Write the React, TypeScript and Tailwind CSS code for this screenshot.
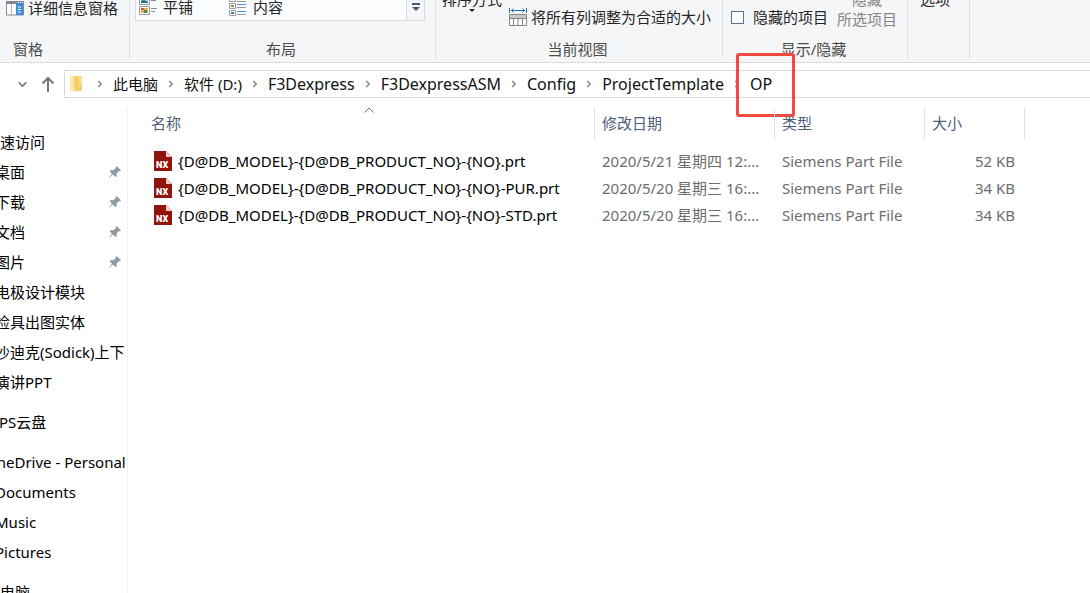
import React from 'react';
import { ChevronRight, ChevronDown } from 'lucide-react';

const files = [
  { name: '{D@DB_MODEL}-{D@DB_PRODUCT_NO}-{NO}.prt', date: '2020/5/21 星期四 12:...', size: '52 KB' },
  { name: '{D@DB_MODEL}-{D@DB_PRODUCT_NO}-{NO}-PUR.prt', date: '2020/5/20 星期三 16:...', size: '34 KB' },
  { name: '{D@DB_MODEL}-{D@DB_PRODUCT_NO}-{NO}-STD.prt', date: '2020/5/20 星期三 16:...', size: '34 KB' },
];

const drives = ['此电脑', '软件 (D:)'];
const folders = ['F3Dexpress', 'F3DexpressASM', 'Config', 'ProjectTemplate', 'OP'];

const sections = [
  {
    title: '快速访问',
    items: [
      { name: '桌面', pinned: true },
      { name: '下载', pinned: true },
      { name: '文档', pinned: true },
      { name: '图片', pinned: true },
      { name: '电极设计模块' },
      { name: '检具出图实体' },
      { name: '沙迪克(Sodick)上下' },
      { name: '演讲PPT' },
    ],
  },
  { title: 'WPS云盘', items: [] },
  { title: 'OneDrive - Personal', items: [{ name: 'Documents' }, { name: 'Music' }, { name: 'Pictures' }] },
  { title: '此电脑', items: [] },
];

function PinIcon() {
  return (
    <svg width="14" height="14" viewBox="0 0 14 14" className="shrink-0" fill="#8f9aa3">
      <path d="M8.6 1 13 5.2l-1 1-1-.2-2.4 2.6.1 2.3-1.2 1.2-2.7-2.7L1.4 12.8 1 12.6l3-3.9L1.6 6.2l1.2-1.1 2.5.1L8 2.8l-.3-1z" />
    </svg>
  );
}

function FileIcon() {
  return (
    <svg width="18" height="20" viewBox="0 0 18 20" className="shrink-0">
      <path d="M0 0h12l6 6v14H0z" fill="#8f140c" />
      <path d="M12 0l6 6h-6z" fill="#f3c9c9" />
      <text x="2" y="17" fontSize="9" fontWeight="900" fontFamily="Roboto, sans-serif" fill="#fff">NX</text>
    </svg>
  );
}

function FolderIcon() {
  return (
    <svg width="13" height="18" viewBox="0 0 13 18" className="shrink-0">
      <path d="M3 1h9v15H3z" fill="#f5cf69" />
      <path d="M9 1h3v9H9z" fill="#fbdf8f" />
      <path d="M0 1h4v16l-4-2z" fill="#ffe9a6" />
    </svg>
  );
}

function DetailsPaneIcon() {
  return (
    <svg width="18" height="15" viewBox="0 0 18 15" className="shrink-0">
      <path d="M.5 1h17v13H.5z" fill="#fff" stroke="#858a90" />
      <path d="M0 0h18v3H0z" fill="#858a90" />
      <path d="M5.5 3v11" stroke="#b3b7bb" />
      <path d="M10 2h7v12h-7z" fill="#3c8fdc" />
      <path d="M12 6h3M12 8.5h3M12 11h3" stroke="#fff" />
      <path d="M12 1.5h1M14 1.5h1M16 1.5h1" stroke="#fff" />
    </svg>
  );
}

function TilesIcon() {
  return (
    <svg width="19" height="18" viewBox="0 0 19 18" className="shrink-0">
      <path d="M.5-1.5h10v8H.5zM.5 8.5h10v8H.5z" fill="#fff" stroke="#9a9a9a" />
      <path d="M2 0h7v5H2z" fill="#9fd0ee" />
      <path d="M2 3l3-1 4 2v1H2z" fill="#2f6f7d" />
      <path d="M2 10h7v5H2z" fill="#d9b45a" />
      <path d="M2 10h3v2H2z" fill="#d05a45" />
      <path d="M5 12h3v3H5z" fill="#4b8a4d" />
      <path d="M12 2.5h5M12 10.5h6M12 13.5h4" stroke="#8a8a8a" />
    </svg>
  );
}

function ContentIcon() {
  return (
    <svg width="18" height="19" viewBox="0 0 18 19" className="shrink-0">
      <path d="M.5-1.5h6v5h-6zM.5 5.5h6v5h-6zM.5 12.5h6v5h-6z" fill="#fff" stroke="#9a9a9a" />
      <path d="M2 1h3v1H2z" fill="#3d7c91" />
      <path d="M2 7h3v2H2z" fill="#98874a" />
      <path d="M2 14h3v2H2z" fill="#3d7c91" />
      <path d="M8 3.5h9M8 9.5h9M8 16.5h9" stroke="#9a9a9a" />
      <path d="M8 1.5h9M8 6.5h9M8 13.5h9" stroke="#4f94f5" />
    </svg>
  );
}

function FitColumnsIcon() {
  return (
    <svg width="18" height="19" viewBox="0 0 18 19" className="shrink-0" fill="none">
      <path d="M.5 0v5M17.5 0v5M2 2.5h14M4.5.5l-2 2 2 2M13.5.5l2 2-2 2" stroke="#2170b8" />
      <path d="M.5 6.5h17v11H.5z" fill="#fff" stroke="#858585" />
      <path d="M1 7h16v4H1z" fill="#c9c9c9" />
      <path d="M.5 10.5h17M4.5 11v7M9 11v7M13.5 11v7" stroke="#858585" />
    </svg>
  );
}

interface RibbonGroupProps {
  label?: string;
  className: string;
  children: React.ReactNode;
}

function RibbonGroup({ label, className, children }: RibbonGroupProps) {
  return (
    <section className={`flex flex-col border-r border-[#dfe1e4] shrink-0 ${className}`}>
      <div className="flex items-end h-[38px]">{children}</div>
      <div className="h-[21px] leading-[22px] pr-[3px] text-center text-[#4c4c4c]">{label}</div>
    </section>
  );
}

function Ribbon() {
  return (
    <div className="flex -ml-[70px] pb-[3px] bg-[#f5f6f7] border-b border-[#d9dbdd] overflow-hidden shrink-0 text-[#262626]">
      <RibbonGroup label="窗格" className="w-[200px]">
        <button className="flex items-center gap-1 ml-auto pr-[11px] pb-5 whitespace-nowrap">
          <DetailsPaneIcon />详细信息窗格
        </button>
      </RibbonGroup>

      <RibbonGroup label="布局" className="w-[306px]">
        <div className="flex items-end grow ml-[5px] mr-[10px] mb-[17px] border border-[#d9dbdd] bg-[#fbfcfd]">
          <button className="flex items-center gap-[5px] w-[90px] pl-[3px] h-[26px]">
            <TilesIcon />平铺
          </button>
          <button className="flex items-center gap-1.5 pl-[3px] h-[26px]">
            <ContentIcon />内容
          </button>
          <button aria-label="更多布局" className="flex justify-center items-center w-[18px] h-[26px] ml-auto border-l border-[#d9dbdd] bg-[#f5f6f7]">
            <svg width="8" height="8" viewBox="0 0 8 8" fill="#44597a">
              <path d="M0 0h8v2H0zM0 4h8L4 8z" />
            </svg>
          </button>
        </div>
      </RibbonGroup>

      <RibbonGroup label="当前视图" className="w-[287px]">
        <button className="flex flex-col items-center ml-1.5 pb-[26px] whitespace-nowrap">
          排序方式
          <svg width="6" height="3" viewBox="0 0 6 3" fill="#262626">
            <path d="M0 0h6L3 3z" />
          </svg>
        </button>
        <button className="flex items-center gap-1 ml-[7px] pb-[11px] whitespace-nowrap">
          <FitColumnsIcon />将所有列调整为合适的大小
        </button>
      </RibbonGroup>

      <RibbonGroup label="显示/隐藏" className="w-[185px]">
        <label className="flex items-center gap-[9px] ml-2 pb-[11px] whitespace-nowrap">
          <input type="checkbox" className="appearance-none w-[13px] h-[13px] border border-[#5a7399] bg-white" />
          隐藏的项目
        </label>
        <button disabled className="flex flex-col items-center ml-[9px] pb-[9px] text-[#868686] whitespace-nowrap">
          <span>隐藏</span>
          <span>所选项目</span>
        </button>
      </RibbonGroup>

      <RibbonGroup className="w-[62px]">
        <button className="ml-3 pb-[29px]">选项</button>
      </RibbonGroup>
    </div>
  );
}

function Separator() {
  return <ChevronRight size={10} strokeWidth={4} className="mx-2 text-[#8a8a8a]" />;
}

function AddressBar() {
  return (
    <div className="flex items-center shrink-0 pt-[7px] pl-4 text-[#111]">
      <button aria-label="最近浏览的位置">
        <ChevronDown size={13} strokeWidth={3} className="text-[#7a7a7a]" />
      </button>
      <button aria-label="上移" className="ml-3 mr-[9px]">
        <svg width="14" height="16" viewBox="0 0 14 16" fill="none" stroke="#767676" strokeWidth="2">
          <path d="M7 16V2M1.5 7.5 7 2l5.5 5.5" />
        </svg>
      </button>
      <nav className="grow h-7 pl-[5px] flex items-center border-y border-l border-[#d9d9d9]">
        <FolderIcon />
        <ol className="flex items-center pl-1">
          {drives.map((drive) => (
            <li key={drive} className="flex items-center">
              <Separator />
              <a href="#" className="whitespace-nowrap">{drive}</a>
            </li>
          ))}
          {folders.map((folder, i) => (
            <li key={folder} className="flex items-center text-base leading-5">
              <Separator />
              <a href="#" className="relative whitespace-nowrap">
                {folder}
                {i === folders.length - 1 && (
                  <span className="absolute -top-[21px] -bottom-[23px] -left-[14px] -right-[23px] border-3 border-[#ef4b40] rounded-[3px]" />
                )}
              </a>
            </li>
          ))}
        </ol>
      </nav>
    </div>
  );
}

function Sidebar() {
  return (
    <aside className="w-32 shrink-0 pr-0.5 border-r border-[#f0f0f0]">
      <div className="flex flex-col gap-2.5 pt-5 overflow-hidden">
        {sections.map((section) => (
          <div key={section.title} className="-ml-[15px] leading-[30px] whitespace-nowrap">
            <a href="#" className="block">{section.title}</a>
            {section.items.map((item) => (
              <a key={item.name} href="#" className="flex items-center justify-between pl-2.5 pr-[3px]">
                {item.name}
                {'pinned' in item && <PinIcon />}
              </a>
            ))}
          </div>
        ))}
      </div>
    </aside>
  );
}

function HeaderCell({ label, className, sorted }: { label: string; className: string; sorted?: boolean }) {
  return (
    <th className={`p-0 pb-[7px] font-normal text-left ${className}`}>
      <div className="relative h-[33px] leading-[33px] pl-[7px] border-r border-[#e3e3e3] text-[#4c607a]">
        {label}
        {sorted && (
          <svg width="10" height="6" viewBox="0 0 10 6" className="absolute top-0 left-1/2 -translate-x-1/2" fill="none" stroke="#6d6d6d">
            <path d="M.5 5.5 5 1l4.5 4.5" />
          </svg>
        )}
      </div>
    </th>
  );
}

export default function App() {
  return (
    <div className="flex flex-col h-screen overflow-hidden bg-white text-black text-[15px] leading-5 font-['Noto_Sans','Noto_Sans_CJK_SC',sans-serif]">
      <Ribbon />
      <AddressBar />
      <div className="flex grow min-h-0 pt-[9px]">
        <Sidebar />
        <main className="grow pl-4">
          <table className="table-fixed w-[881px] border-collapse whitespace-nowrap">
            <thead>
              <tr>
                <HeaderCell label="名称" className="w-[451px]" sorted />
                <HeaderCell label="修改日期" className="w-[180px]" />
                <HeaderCell label="类型" className="w-[150px]" />
                <HeaderCell label="大小" className="w-[100px]" />
              </tr>
            </thead>
            <tbody className="text-[#6d6d6d]">
              {files.map((file) => (
                <tr key={file.name} className="h-[27px]">
                  <td className="p-0 pl-2.5 text-black">
                    <div className="flex items-center gap-1.5">
                      <FileIcon />
                      {file.name}
                    </div>
                  </td>
                  <td className="p-0 pl-[7px]">{file.date}</td>
                  <td className="p-0 pl-[7px]">Siemens Part File</td>
                  <td className="p-0 pr-2.5 text-right">{file.size}</td>
                </tr>
              ))}
            </tbody>
          </table>
        </main>
      </div>
    </div>
  );
}
